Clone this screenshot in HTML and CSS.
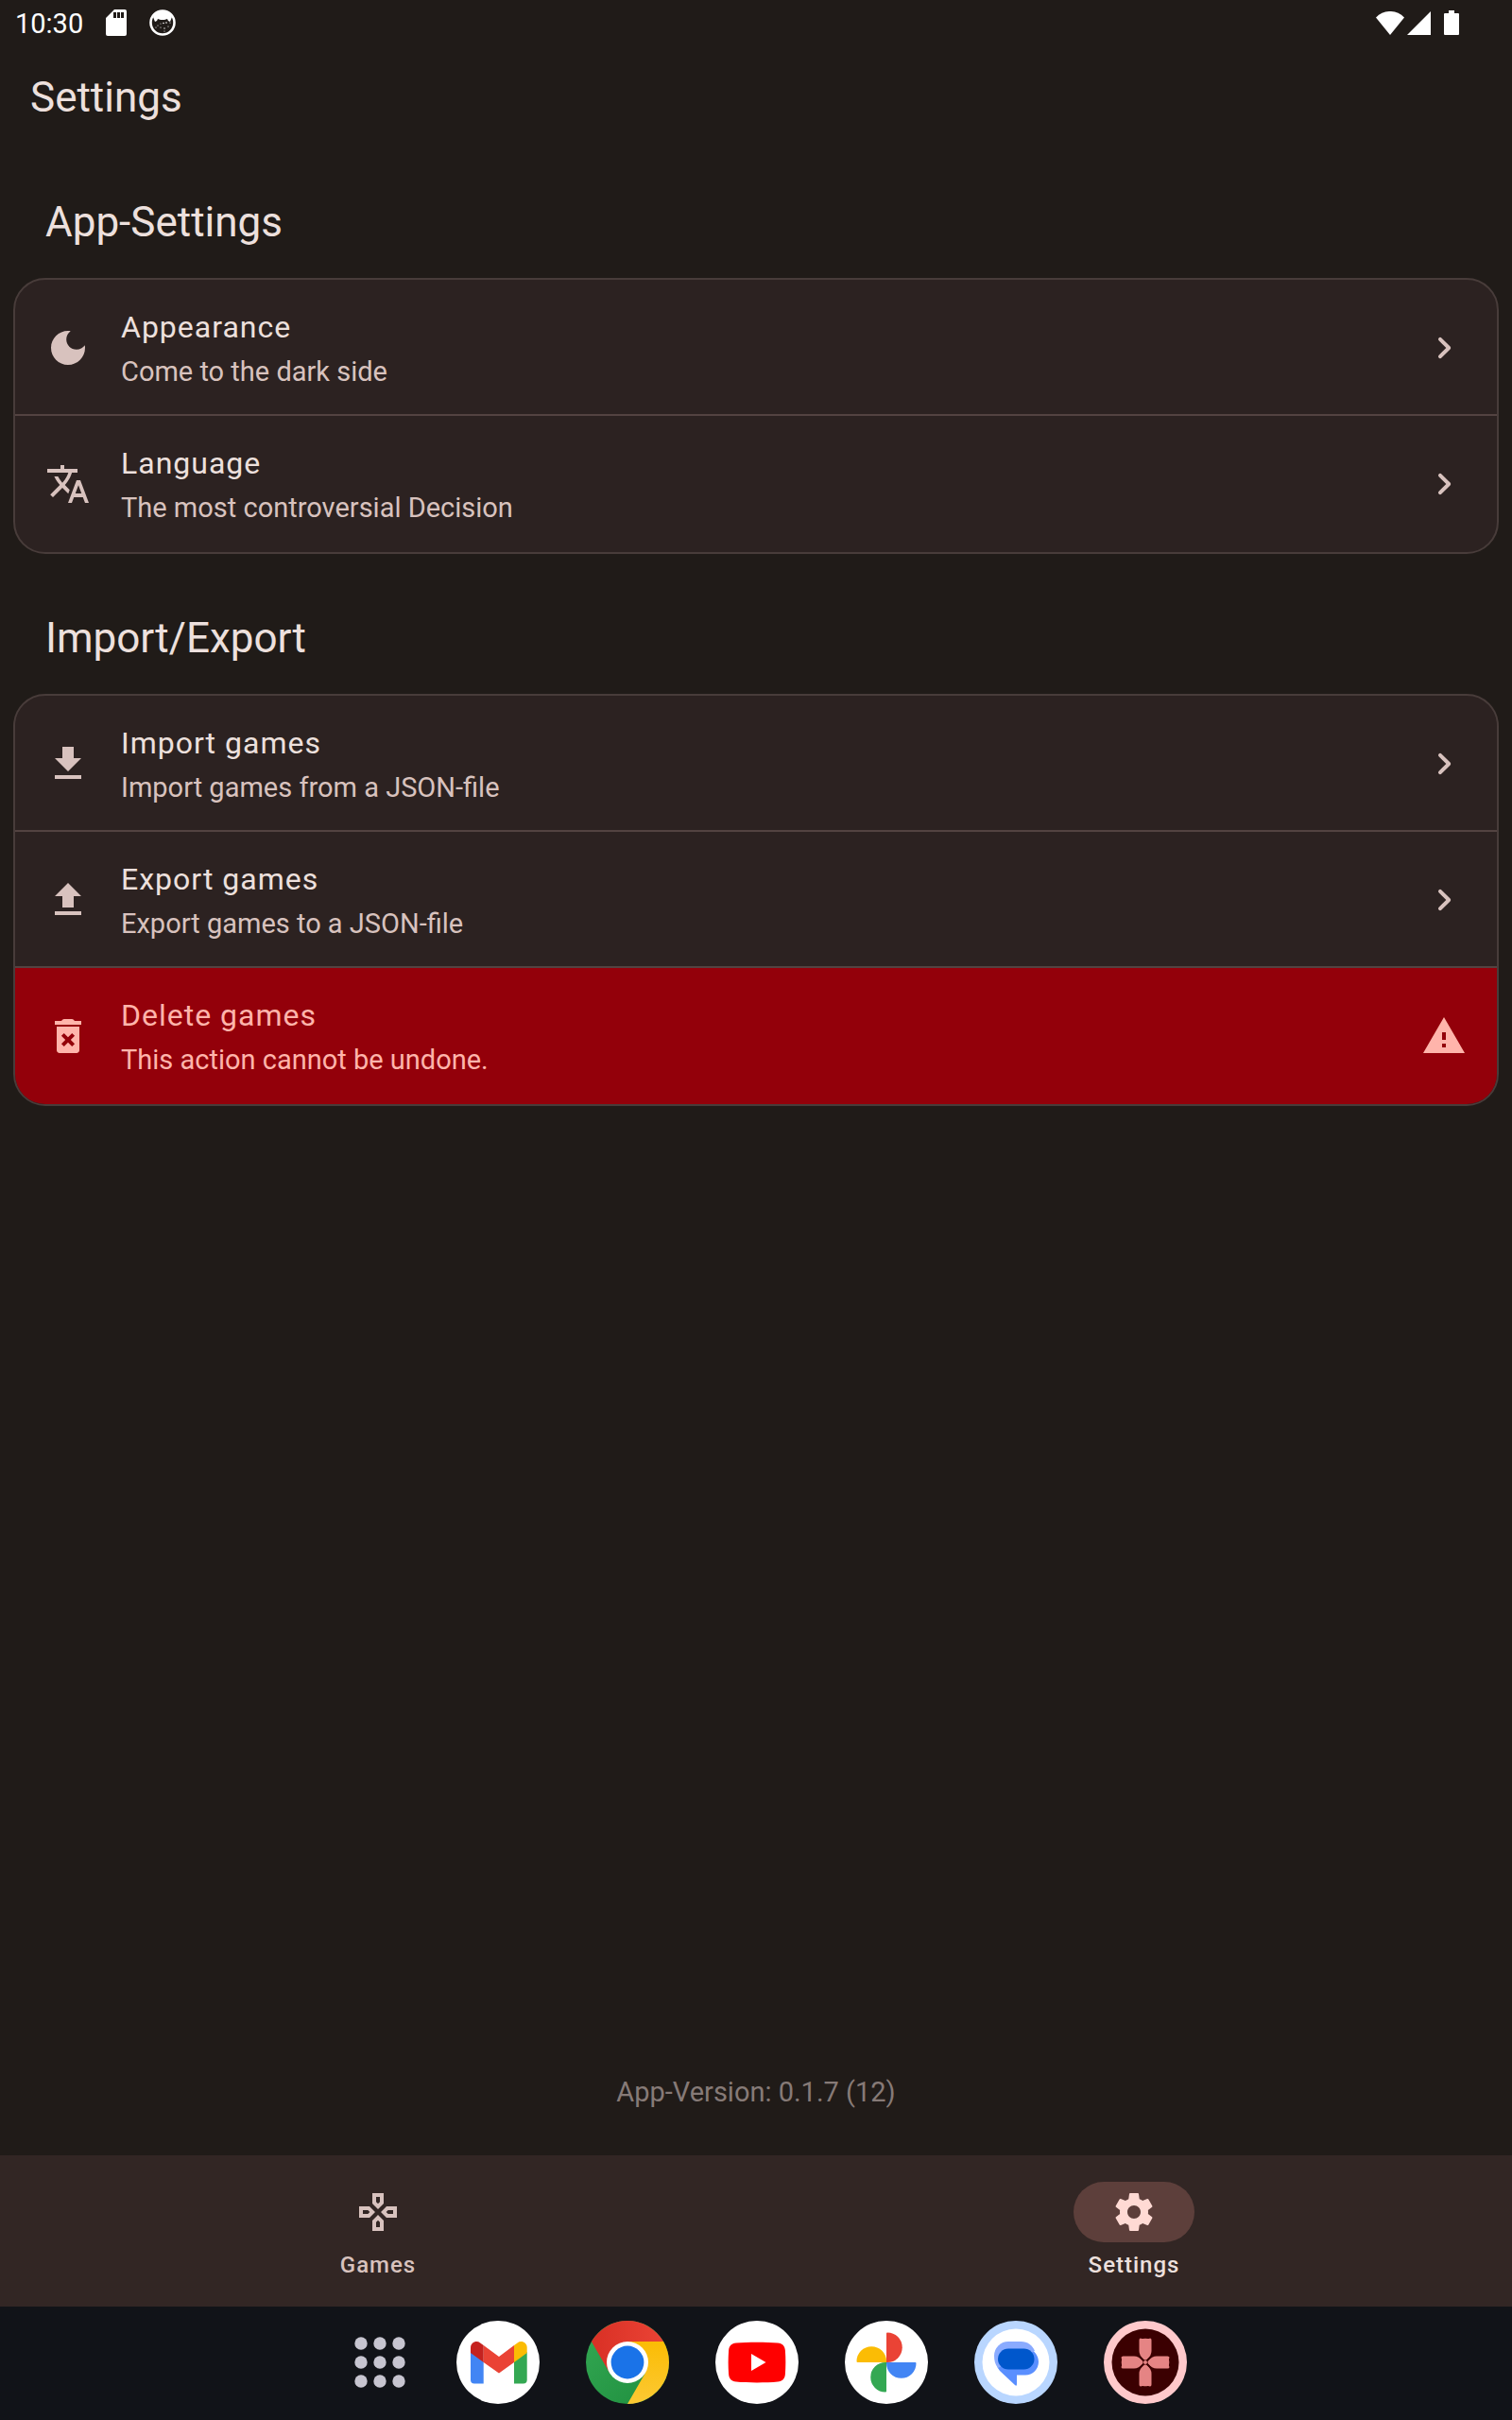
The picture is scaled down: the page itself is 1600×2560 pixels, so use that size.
FILE: index.html
```html
<!DOCTYPE html>
<html lang="en">
<head>
<meta charset="utf-8">
<meta name="viewport" content="width=device-width, initial-scale=1">
<title>Settings</title>
<link rel="stylesheet" href="styles.css">
</head>
<body>
<div class="screen">
  <div class="status-bar">
    <div class="status-group status-left">
      <span class="clock">10:30</span>
      <svg class="sd-icon" viewBox="0 0 22 28" aria-hidden="true"><path fill="#fff" fill-rule="evenodd" d="M9 0h11a2 2 0 0 1 2 2v24a2 2 0 0 1-2 2H2a2 2 0 0 1-2-2V9zM8 3v6h3V3zm4 0v6h3V3zm4 0v6h3V3z"/></svg>
      <svg class="face-icon" viewBox="0 0 28 28" aria-hidden="true"><circle cx="14" cy="14" r="12.500" fill="none" stroke="#fff" stroke-width="2.600"/><path fill="#fff" d="M4 8C6 3 10 1 14 1s8 2 10 7l-2 5-2-1-1-2-3 1h-4l-3-1-1 2-2 1z"/><g fill="#fff"><circle cx="15" cy="14.500" r=".8"/><circle cx="18" cy="14" r=".8"/><circle cx="9" cy="17" r=".6"/><circle cx="12" cy="19" r=".6"/><circle cx="16" cy="20" r=".7"/><circle cx="20" cy="18" r=".6"/><circle cx="16" cy="23" r=".6"/><circle cx="7" cy="19" r=".6"/><circle cx="22" cy="14" r=".6"/><circle cx="12" cy="15" r=".5"/></g></svg>
    </div>
    <div class="status-group status-right">
      <svg class="wifi-icon" viewBox="0 0 30 25" aria-hidden="true"><path fill="#fff" d="M0 6.500C8-2.200 22-2.200 30 6.500L15 25z"/></svg>
      <svg class="signal-icon" viewBox="0 0 25 25" aria-hidden="true"><path fill="#fff" d="M25 0v25H0z"/></svg>
      <svg class="battery-icon" viewBox="0 0 16 26" aria-hidden="true"><path fill="#fff" d="M5 0h6v3h4a1 1 0 0 1 1 1v21a1 1 0 0 1-1 1H1a1 1 0 0 1-1-1V4a1 1 0 0 1 1-1h4z"/></svg>
    </div>
  </div>

  <header class="app-bar"><h1 class="heading">Settings</h1></header>

  <main class="content">
    <section class="section">
      <h2 class="heading">App-Settings</h2>
      <div class="card">
        <button class="row" type="button">
          <svg class="icon" viewBox="0 0 24 24" aria-hidden="true"><path d="M12 3c-4.970 0-9 4.030-9 9s4.030 9 9 9 9-4.030 9-9c0-.46-.04-.92-.1-1.360-.98 1.370-2.580 2.260-4.400 2.260-2.980 0-5.400-2.420-5.400-5.400 0-1.810.89-3.420 2.260-4.400-.44-.06-.9-.1-1.360-.1z"/></svg>
          <span class="row-text"><span class="row-title">Appearance</span><span class="row-subtitle">Come to the dark side</span></span>
          <svg class="icon" viewBox="0 0 24 24" aria-hidden="true"><path d="M9.290 6.710c-.39.39-.39 1.020 0 1.410L13.170 12l-3.880 3.880c-.39.39-.39 1.020 0 1.410.39.39 1.020.39 1.410 0l4.590-4.590c.39-.39.39-1.020 0-1.410L10.700 6.700c-.38-.38-1.020-.38-1.410.01z"/></svg>
        </button>
        <button class="row" type="button">
          <svg class="icon" viewBox="0 0 24 24" aria-hidden="true"><path d="M12.870 15.070l-2.540-2.510.03-.03c1.740-1.940 2.980-4.170 3.710-6.530H17V4h-7V2H8v2H1v1.990h11.170C11.500 7.920 10.440 9.750 9 11.350 8.070 10.320 7.300 9.190 6.690 8h-2c.73 1.630 1.730 3.170 2.980 4.560l-5.090 5.020L4 19l5-5 3.110 3.110.76-2.040zM18.500 10h-2L12 22h2l1.120-3h4.750L21 22h2l-4.500-12zm-2.620 7l1.620-4.330L19.120 17h-3.240z"/></svg>
          <span class="row-text"><span class="row-title">Language</span><span class="row-subtitle">The most controversial Decision</span></span>
          <svg class="icon" viewBox="0 0 24 24" aria-hidden="true"><path d="M9.290 6.710c-.39.39-.39 1.020 0 1.410L13.170 12l-3.880 3.880c-.39.39-.39 1.020 0 1.410.39.39 1.020.39 1.410 0l4.590-4.590c.39-.39.39-1.020 0-1.410L10.700 6.700c-.38-.38-1.020-.38-1.410.01z"/></svg>
        </button>
      </div>
    </section>

    <section class="section">
      <h2 class="heading">Import/Export</h2>
      <div class="card">
        <button class="row" type="button">
          <svg class="icon" viewBox="0 0 24 24" aria-hidden="true"><path d="M19 9h-4V3H9v6H5l7 7 7-7zM5 18v2h14v-2H5z"/></svg>
          <span class="row-text"><span class="row-title">Import games</span><span class="row-subtitle">Import games from a JSON-file</span></span>
          <svg class="icon" viewBox="0 0 24 24" aria-hidden="true"><path d="M9.290 6.710c-.39.39-.39 1.020 0 1.410L13.170 12l-3.880 3.880c-.39.39-.39 1.020 0 1.410.39.39 1.020.39 1.410 0l4.590-4.590c.39-.39.39-1.020 0-1.410L10.700 6.700c-.38-.38-1.020-.38-1.410.01z"/></svg>
        </button>
        <button class="row" type="button">
          <svg class="icon" viewBox="0 0 24 24" aria-hidden="true"><path d="M9 16h6v-6h4l-7-7-7 7h4zm-4 2h14v2H5z"/></svg>
          <span class="row-text"><span class="row-title">Export games</span><span class="row-subtitle">Export games to a JSON-file</span></span>
          <svg class="icon" viewBox="0 0 24 24" aria-hidden="true"><path d="M9.290 6.710c-.39.39-.39 1.020 0 1.410L13.170 12l-3.880 3.880c-.39.39-.39 1.020 0 1.410.39.39 1.020.39 1.410 0l4.590-4.590c.39-.39.39-1.020 0-1.410L10.700 6.700c-.38-.38-1.020-.38-1.410.01z"/></svg>
        </button>
        <button class="row row-danger" type="button">
          <svg class="icon" viewBox="0 0 24 24" aria-hidden="true"><path d="M6 19.500c0 .83.67 1.500 1.500 1.500h9c.83 0 1.500-.67 1.500-1.500V7H6zM8.460 11.880l1.410-1.410L12 12.590l2.120-2.120 1.410 1.410L13.410 14l2.120 2.120-1.410 1.410L12 15.410l-2.120 2.120-1.410-1.410L10.590 14zM19 4h-3.500l-.7-.7c-.18-.18-.44-.3-.7-.3H9.900c-.26 0-.52.12-.7.3l-.7.7H5v2h14z" fill-rule="evenodd"/></svg>
          <span class="row-text"><span class="row-title">Delete games</span><span class="row-subtitle">This action cannot be undone.</span></span>
          <svg class="icon" viewBox="0 0 24 24" aria-hidden="true"><path d="M1 21h22L12 2 1 21zm12-3h-2v-2h2v2zm0-4h-2v-4h2v4z"/></svg>
        </button>
      </div>
    </section>

    <p class="version">App-Version: 0.1.7 (12)</p>
  </main>

  <nav class="nav-bar">
    <a class="nav-item" href="#games">
      <span class="nav-pill"><svg class="icon" viewBox="0 0 24 24" aria-hidden="true"><path d="M13 4v2.670l-1 1-1-1V4h2m7 7v2h-2.670l-1-1 1-1H20M6.670 11l1 1-1 1H4v-2h2.670M12 16.330l1 1V20h-2v-2.670l1-1M15 2H9v5.500l3 3 3-3V2zm7 7h-5.500l-3 3 3 3H22V9zM7.500 9H2v6h5.500l3-3-3-3zm4.500 4.500l-3 3V22h6v-5.500l-3-3z" fill-rule="evenodd"/></svg></span>
      <span>Games</span>
    </a>
    <a class="nav-item nav-item-active" href="#settings" aria-current="page">
      <span class="nav-pill"><svg class="icon" viewBox="0 0 24 24" aria-hidden="true"><path d="M19.430 12.980c.04-.32.07-.64.07-.98s-.03-.66-.07-.98l2.110-1.650c.19-.15.24-.42.12-.64l-2-3.460c-.12-.22-.39-.3-.61-.22l-2.490 1c-.52-.4-1.080-.73-1.690-.98l-.38-2.650C14.460 2.180 14.250 2 14 2h-4c-.25 0-.46.18-.49.42l-.38 2.650c-.61.25-1.170.59-1.690.98l-2.490-1c-.23-.09-.49 0-.61.22l-2 3.460c-.13.22-.07.49.12.64l2.110 1.650c-.04.32-.07.65-.07.98s.03.66.07.98l-2.110 1.650c-.19.15-.24.42-.12.64l2 3.460c.12.22.39.3.61.22l2.490-1c.52.4 1.080.73 1.690.98l.38 2.650c.03.24.24.42.49.42h4c.25 0 .46-.18.49-.42l.38-2.650c.61-.25 1.170-.59 1.690-.98l2.490 1c.23.09.49 0 .61-.22l2-3.460c.12-.22.07-.49-.12-.64l-2.110-1.650zM12 15.500c-1.930 0-3.500-1.570-3.500-3.500s1.570-3.500 3.500-3.500 3.500 1.570 3.500 3.500-1.570 3.500-3.500 3.500z"/></svg></span>
      <span>Settings</span>
    </a>
  </nav>

  <div class="taskbar">
    <button class="task task-all" type="button" aria-label="All apps">
      <svg viewBox="0 0 64 64"><g fill="#c7c5d0"><circle cx="12" cy="12" r="6.700"/><circle cx="32" cy="12" r="6.700"/><circle cx="52" cy="12" r="6.700"/><circle cx="12" cy="32" r="6.700"/><circle cx="32" cy="32" r="6.700"/><circle cx="52" cy="32" r="6.700"/><circle cx="12" cy="52" r="6.700"/><circle cx="32" cy="52" r="6.700"/><circle cx="52" cy="52" r="6.700"/></g></svg>
    </button>
    <button class="task" type="button" aria-label="Gmail">
      <svg viewBox="0 0 88 88"><circle cx="44" cy="44" r="44" fill="#fff"/><path fill="#4285f4" d="M15 33l13.700 10v23.500H19a4 4 0 0 1-4-4z"/><path fill="#34a853" d="M61 43l13.700-10v29.500a4 4 0 0 1-4 4H61z"/><path fill="#fbbc04" d="M61 26l3.500-2.600c4.200-3.100 10.200-.3 10.200 5V34L61 44z"/><path fill="#ea4335" d="M28.700 26L45 38l16-12v18L45 55.500 28.700 44z"/><path fill="#c5221f" d="M15 28.400c0-5.300 6-8.100 10.200-5l3.500 2.600v18L15 34z"/></svg>
    </button>
    <button class="task" type="button" aria-label="Chrome">
      <svg viewBox="0 0 88 88">
        <defs>
          <linearGradient id="red"><stop stop-color="#d93025"/><stop offset="1" stop-color="#ea4335"/></linearGradient>
          <linearGradient id="yellow" x1="0" y1="1" x2="0" y2="0"><stop stop-color="#fcc934"/><stop offset="1" stop-color="#fbbc04"/></linearGradient>
          <linearGradient id="green" x1="1" y1="1" x2="0" y2="0"><stop stop-color="#1e8e3e"/><stop offset="1" stop-color="#34a853"/></linearGradient>
        </defs>
        <circle cx="44" cy="44" r="44" fill="url(#green)"/>
        <path fill="url(#yellow)" d="M44 22h38.100A44 44 0 0 1 44 88l19-33z"/>
        <path fill="url(#red)" d="M44 22h38.100A44 44 0 0 0 5.900 22L25 55z"/>
        <circle cx="44" cy="44" r="22" fill="#fff"/><circle cx="44" cy="44" r="17.400" fill="#1a73e8"/>
      </svg>
    </button>
    <button class="task" type="button" aria-label="YouTube">
      <svg viewBox="0 0 88 88"><circle cx="44" cy="44" r="44" fill="#fff"/><path fill="#f00" d="M22 23.600c12-1.200 32-1.200 44 0 5 .5 7.500 3 7.900 8 .6 8 .6 17 0 25-.4 5-2.900 7.500-7.900 8-12 1.200-32 1.200-44 0-5-.5-7.500-3-7.900-8-.6-8-.6-17 0-25 .4-5 2.900-7.500 7.900-8z"/><path fill="#fff" d="M38 35l15.500 9L38 53z"/></svg>
    </button>
    <button class="task" type="button" aria-label="Photos">
      <svg viewBox="0 0 88 88"><circle cx="44" cy="44" r="44" fill="#fff"/><path fill="#ea4335" d="M44 44V13.500q0-1 1-1a15.750 15.750 0 0 1 0 31.500z"/><path fill="#4285f4" d="M44 44h30.500q1 0 1 1a15.750 15.750 0 0 1-31.500 0z"/><path fill="#34a853" d="M44 44v30.500q0 1-1 1a15.750 15.750 0 0 1 0-31.500z"/><path fill="#fbbc04" d="M44 44H13.500q-1 0-1-1a15.750 15.750 0 0 1 31.500 0z"/></svg>
    </button>
    <button class="task" type="button" aria-label="Messages">
      <svg viewBox="0 0 88 88"><circle cx="44" cy="44" r="44" fill="#b9d6ff"/><circle cx="44" cy="44" r="35.500" fill="#fff"/><path fill="#5a8fff" d="M40 29.500h18c6 2 10 8 10 14a14 14 0 0 1-14 14h-9V67q0 3-2 1L27 53q-5-5-2-14z"/><path fill="#8aabff" d="M36 22h13.500c7 0 12 4 14.500 10L25 50c-3-4-4-8-4-13a15 15 0 0 1 15-15z"/><rect x="25" y="29.500" width="38.500" height="22" rx="11" fill="#0057cc"/></svg>
    </button>
    <button class="task" type="button" aria-label="Game controls">
      <svg viewBox="0 0 88 88"><circle cx="44" cy="44" r="44" fill="#ffc9cb"/><circle cx="44" cy="44" r="35.500" fill="#3b0001"/><g fill="#e58484"><path id="petal" d="M39 18.500q1.500.8 2.500.5 2.500-.6 5 0 1 .3 2.500-.5 1.500 0 1.500 2V32q0 5-5 9.500h-3q-5-4.500-5-9.500V20.500q0-2 1.500-2z"/><use href="#petal" transform="rotate(90 44 44)"/><use href="#petal" transform="rotate(180 44 44)"/><use href="#petal" transform="rotate(270 44 44)"/></g><path d="M38 38l12 12M50 38L38 50" stroke="#3b0001" stroke-width="2"/><circle cx="44" cy="44" r="2" fill="#e58484"/></svg>
    </button>
  </div>
</div>
</body>
</html>
```
FILE: styles.css
```css
* { box-sizing: border-box; }

body {
  margin: 0;
  background: #201b18;
  color: #ede0dd;
  font-family: Roboto, "Noto Sans", sans-serif;
}

button {
  margin: 0;
  border: 0;
  background: none;
  color: inherit;
  font: inherit;
  text-align: left;
}

svg { display: block; }

.screen {
  display: flex;
  flex-direction: column;
  min-height: 100vh;
}

.status-bar {
  display: flex;
  align-items: center;
  justify-content: space-between;
  height: 48px;
  padding: 0 56px 0 16px;
  color: #fff;
}

.status-group { display: flex; align-items: center; }
.status-left { gap: 24px; }
.clock { padding-top: 2px; font-size: 29px; line-height: 32px; }
.sd-icon { width: 22px; height: 28px; }
.face-icon { width: 28px; height: 28px; }
.wifi-icon { width: 30px; height: 25px; margin-right: 3px; }
.signal-icon { width: 25px; height: 25px; margin-right: 14px; }
.battery-icon { width: 16px; height: 26px; }

.app-bar {
  display: flex;
  align-items: center;
  height: 112px;
  padding: 0 32px 2px;
}

.heading {
  margin: 0;
  font-size: 44px;
  font-weight: 400;
  line-height: 54px;
}

.content {
  display: flex;
  flex: 1;
  flex-direction: column;
  gap: 62px;
  padding: 48px 14px 46px;
}

.section {
  display: flex;
  flex-direction: column;
  gap: 32px;
}

.section .heading { padding: 0 34px; }

.card {
  overflow: hidden;
  border: 2px solid #483c3a;
  border-radius: 34px;
  background: #2c2221;
}

.row {
  display: flex;
  align-items: center;
  gap: 32px;
  width: 100%;
  height: 144px;
  padding: 0 32px;
  box-shadow: inset 0 -2px #534341;
}

.row:last-child { box-shadow: none; }

.icon {
  flex: none;
  width: 48px;
  height: 48px;
  fill: #d8c2be;
}

.row-text {
  display: flex;
  flex: 1;
  flex-direction: column;
  gap: 2px;
}

.row-title {
  font-size: 32px;
  line-height: 48px;
  letter-spacing: 1px;
}

.row-subtitle {
  color: #d8c2be;
  font-size: 29px;
  line-height: 42px;
}

.row-danger { background: #93000a; color: #ffb4ab; }
.row-danger .row-subtitle { color: inherit; }
.row-danger .icon { fill: currentColor; }

.version {
  margin: auto 0 0;
  color: #867a77;
  font-size: 29px;
  line-height: 42px;
  text-align: center;
}

.nav-bar {
  display: flex;
  height: 160px;
  background: #322624;
}

.nav-item {
  display: flex;
  flex: 1;
  flex-direction: column;
  align-items: center;
  gap: 8px;
  padding-top: 28px;
  color: #d8c2be;
  font-size: 24px;
  font-weight: 500;
  line-height: 32px;
  letter-spacing: 1px;
  text-decoration: none;
}

.nav-pill {
  display: flex;
  align-items: center;
  justify-content: center;
  width: 128px;
  height: 64px;
  border-radius: 32px;
}

.nav-item-active { color: #ede0dd; }
.nav-item-active .nav-pill { background: #5d3f3b; }
.nav-item-active .icon { fill: #ffdad4; }

.taskbar {
  display: flex;
  align-items: center;
  justify-content: center;
  gap: 49px;
  height: 120px;
  padding: 0 0 2px 26px;
  background: #111318;
}

.task {
  width: 88px;
  height: 88px;
  padding: 0;
}

.task-all { width: 64px; height: 64px; }
```
